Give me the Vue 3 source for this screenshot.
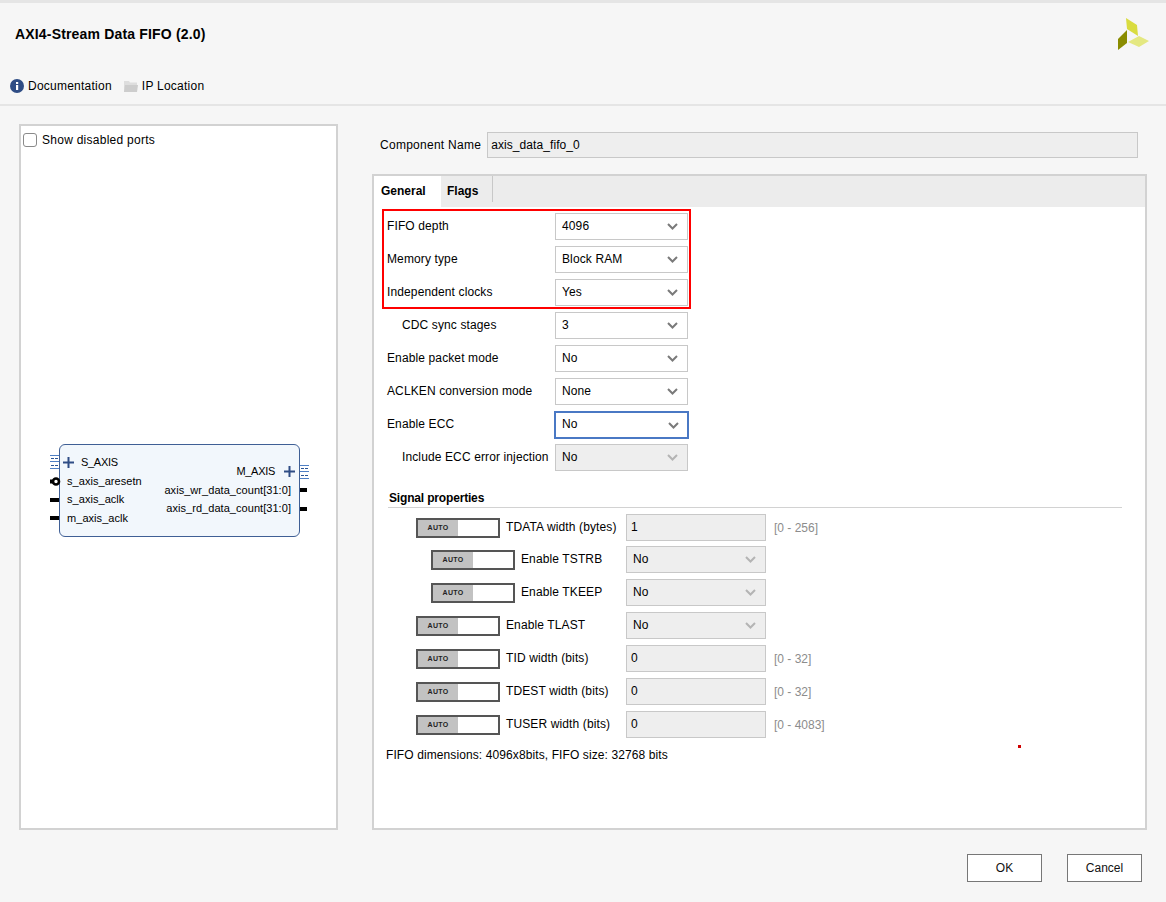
<script setup>
const top = [
  { label: 'FIFO depth', value: '4096' },
  { label: 'Memory type', value: 'Block RAM' },
  { label: 'Independent clocks', value: 'Yes' },
]
const rest = [
  { label: 'CDC sync stages', value: '3', indent: true },
  { label: 'Enable packet mode', value: 'No' },
  { label: 'ACLKEN conversion mode', value: 'None' },
  { label: 'Enable ECC', value: 'No', focus: true },
  { label: 'Include ECC error injection', value: 'No', indent: true, disabled: true },
]
const signals = [
  { label: 'TDATA width (bytes)', value: '1', range: '[0 - 256]' },
  { label: 'Enable TSTRB', value: 'No', select: true, indent: true },
  { label: 'Enable TKEEP', value: 'No', select: true, indent: true },
  { label: 'Enable TLAST', value: 'No', select: true },
  { label: 'TID width (bits)', value: '0', range: '[0 - 32]' },
  { label: 'TDEST width (bits)', value: '0', range: '[0 - 32]' },
  { label: 'TUSER width (bits)', value: '0', range: '[0 - 4083]' },
]
const leftPorts = ['s_axis_aresetn', 's_axis_aclk', 'm_axis_aclk']
const rightPorts = ['axis_wr_data_count[31:0]', 'axis_rd_data_count[31:0]']
</script>

<template>
  <div class="page">
    <header class="head">
      <h1 class="title">AXI4-Stream Data FIFO (2.0)</h1>
      <svg class="logo" width="32" height="33" viewBox="1118 18 32 33">
        <polygon points="1126,18 1137,25 1138,36 1127,29" fill="#d9dc40" />
        <polygon points="1118,39 1127,30 1127,43 1118,50" fill="#8a8c00" />
        <polygon points="1128,42 1139,36 1149,41 1139,47" fill="#e4e881" />
      </svg>
    </header>
    <nav class="links">
      <span class="link">
        <svg width="14" height="14" viewBox="0 0 14 14">
          <circle cx="7" cy="7" r="7" fill="#2f4d85" />
          <rect x="6" y="6" width="2.2" height="5" fill="#fff" />
          <rect x="6" y="3" width="2.2" height="2" fill="#fff" />
        </svg>
        Documentation
      </span>
      <span class="link">
        <svg width="14" height="13" viewBox="0 0 14 13">
          <path d="M0 1h5l1 1.5h7V12H0z" fill="#dedede" />
          <path d="M1 5h13l-1 7H0z" fill="#cdcdcd" />
        </svg>
        IP Location
      </span>
    </nav>

    <main class="main">
      <section class="symbol">
        <label class="show"><span class="check"></span>Show disabled ports</label>
        <div class="block">
          <div class="col left">
            <div class="bus">
              <svg class="plus" width="11" height="11" viewBox="0 0 11 11"><path d="M5.5 0v11M0 5.5h11" stroke="#2f4d85" stroke-width="2" /></svg>
              S_AXIS
            </div>
            <div v-for="p in leftPorts" :key="p" class="port">{{ p }}</div>
          </div>
          <div class="col right">
            <div class="bus">
              M_AXIS
              <svg class="plus" width="11" height="11" viewBox="0 0 11 11"><path d="M5.5 0v11M0 5.5h11" stroke="#2f4d85" stroke-width="2" /></svg>
            </div>
            <div v-for="p in rightPorts" :key="p" class="port">{{ p }}</div>
          </div>
        </div>
        <svg class="pins" width="290" height="100" viewBox="45 440 290 100">
          <g fill="none">
            <path d="M50 455.5h9M50 461.5h9M50 468.5h9M300 465.5h9M300 471.5h9M300 478.5h9" stroke="#4f7fc4" />
            <path d="M51 458.5h8M51 465.5h8M301 468.5h8M301 475.5h8" stroke="#2a5596" stroke-dasharray="3 1" />
          </g>
          <path d="M50 481.5h9M50 500h9M50 518h9M300 490h7M300 509h7" stroke="#000" stroke-width="4" />
          <circle cx="56" cy="481.5" r="3" fill="#fff" stroke="#000" stroke-width="2.6" />
        </svg>
      </section>

      <section class="config">
        <div class="name-row">
          <span class="name-label">Component Name</span>
          <div class="name-field">axis_data_fifo_0</div>
        </div>
        <div class="tabs">
          <div class="tabbar">
            <div class="tab active">General</div>
            <div class="tab">Flags</div>
          </div>
          <div class="form">
            <div class="redbox">
              <div v-for="r in top" :key="r.label" class="row">
                <span class="lbl">{{ r.label }}</span>
                <div class="select">
                  <span>{{ r.value }}</span>
                  <svg width="11" height="7" viewBox="0 0 11 7"><path d="M1 1l4.5 4.5L10 1" fill="none" stroke="#7a7a7a" stroke-width="2" /></svg>
                </div>
              </div>
            </div>
            <div class="plain">
              <div v-for="r in rest" :key="r.label" class="row">
                <span class="lbl" :class="{ ind: r.indent }">{{ r.label }}</span>
                <div class="select" :class="{ focus: r.focus, off: r.disabled }">
                  <span>{{ r.value }}</span>
                  <svg width="11" height="7" viewBox="0 0 11 7"><path d="M1 1l4.5 4.5L10 1" fill="none" :stroke="r.disabled ? '#b4b4b4' : '#7a7a7a'" stroke-width="2" /></svg>
                </div>
              </div>
            </div>
            <div class="signals">
              <div class="sig-title">Signal properties</div>
              <div v-for="s in signals" :key="s.label" class="sig-row">
                <div class="sig-left" :class="{ ind: s.indent }">
                  <div class="auto"><span class="auto-on">AUTO</span></div>
                  <span class="sig-label">{{ s.label }}</span>
                </div>
                <div v-if="s.select" class="select off wide">
                  <span>{{ s.value }}</span>
                  <svg width="11" height="7" viewBox="0 0 11 7"><path d="M1 1l4.5 4.5L10 1" fill="none" stroke="#b4b4b4" stroke-width="2" /></svg>
                </div>
                <div v-else class="input">{{ s.value }}</div>
                <span v-if="s.range" class="range">{{ s.range }}</span>
              </div>
            </div>
            <p class="dims">FIFO dimensions: 4096x8bits, FIFO size: 32768 bits</p>
            <span class="dot"></span>
          </div>
        </div>
      </section>
    </main>

    <footer class="foot">
      <button class="btn">OK</button>
      <button class="btn">Cancel</button>
    </footer>
  </div>
</template>

<style>
html, body { margin: 0; }
</style>

<style scoped>
.page {
  width: 1166px;
  height: 902px;
  box-sizing: border-box;
  border-top: 3px solid #e5e5e5;
  background: #f6f6f6;
  font-family: "Liberation Sans", Arial, sans-serif;
  font-size: 12px;
  letter-spacing: 0.12px;
  color: #000;
  overflow: hidden;
}
.head {
  height: 62px;
  display: flex;
  align-items: flex-start;
  justify-content: space-between;
  padding: 0 16px 0 15px;
}
.title {
  margin: 22px 0 0;
  font-size: 14px;
  line-height: 18px;
  font-weight: 700;
  letter-spacing: 0.17px;
  color: #000;
}
.logo { margin-top: 15px; }
.links {
  height: 41px;
  box-sizing: border-box;
  border-bottom: 2px solid #e5e5e5;
  display: flex;
  gap: 12px;
  padding: 13px 0 0 10px;
  letter-spacing: 0.24px;
}
.link {
  display: flex;
  align-items: center;
  gap: 4px;
  height: 16px;
  line-height: 16px;
}
.main {
  display: flex;
  gap: 34px;
  padding: 18px 19px 0;
}
.symbol {
  position: relative;
  width: 319px;
  height: 706px;
  box-sizing: border-box;
  border: 2px solid #d2d2d2;
  background: #fff;
}
.show {
  display: flex;
  align-items: center;
  gap: 5px;
  padding: 7px 0 0 2px;
  line-height: 14px;
  letter-spacing: 0.26px;
}
.check {
  width: 14px;
  height: 14px;
  box-sizing: border-box;
  border: 1px solid #8a8a8a;
  border-radius: 3px;
  background: #fff;
}
.block {
  position: absolute;
  left: 38px;
  top: 318px;
  width: 241px;
  height: 93px;
  box-sizing: border-box;
  border: 1px solid #3f5f95;
  border-radius: 6px;
  background: #f2f7fc;
  display: flex;
  justify-content: space-between;
  font-size: 11px;
  letter-spacing: 0.05px;
}
.col { display: flex; flex-direction: column; }
.col.left { padding: 8px 0 0 3px; }
.col.right { padding: 17px 4px 0 0; align-items: flex-end; }
.bus { height: 18.6px; line-height: 18.6px; display: flex; align-items: center; gap: 7px; letter-spacing: -0.3px; }
.col.left .port { height: 18.6px; line-height: 18.6px; padding-left: 4px; }
.col.right .port { height: 18.6px; line-height: 18.6px; padding-right: 4px; }
.col.right .bus { gap: 9px; }
.pins { position: absolute; left: 24px; top: 314px; }
.config { width: 775px; }
.name-row {
  display: flex;
  align-items: center;
  gap: 6px;
  padding: 8px 9px 0 8px;
  height: 26px;
  letter-spacing: 0.27px;
}
.name-label { white-space: nowrap; }
.name-field {
  flex: 1;
  height: 26px;
  box-sizing: border-box;
  border: 1px solid #c8c8c8;
  background: #eeeeee;
  padding-left: 3px;
  line-height: 24px;
  letter-spacing: 0.08px;
}
.tabs {
  margin-top: 16px;
  height: 656px;
  box-sizing: border-box;
  border: 2px solid #d2d2d2;
  background: #fff;
}
.tabbar {
  display: flex;
  height: 31px;
  background: #ececec;
  letter-spacing: 0;
}
.tab {
  font-weight: 700;
  line-height: 30px;
  padding: 0 15px 0 6px;
}
.tab.active { background: #fff; width: 67px; box-sizing: border-box; padding-left: 7px; }
.tab:not(.active) { height: 26px; line-height: 30px; border-right: 1px solid #c8c8c8; width: 52px; box-sizing: border-box; }
.form { position: relative; padding: 2px 0 0 8px; }
.redbox {
  width: 309px;
  height: 100px;
  box-sizing: border-box;
  border: 2px solid #f00;
  padding: 2px 0 0 3px;
  display: flex;
  flex-direction: column;
  gap: 6px;
}
.plain {
  display: flex;
  flex-direction: column;
  gap: 6px;
  margin-top: 3px;
  padding-left: 5px;
}
.row { display: flex; align-items: center; height: 27px; }
.lbl { width: 168px; flex: none; padding-bottom: 2px; box-sizing: border-box; white-space: nowrap; }
.lbl.ind { padding-left: 15px; }
.select {
  width: 133px;
  height: 27px;
  box-sizing: border-box;
  border: 1px solid #c8c8c8;
  background: #fff;
  display: flex;
  align-items: center;
  justify-content: space-between;
  padding: 0 9px 0 6px;
}
.select span { padding-bottom: 2px; }
.select.focus {
  border: 2px solid #4a78c4;
  padding: 0 8px 0 6px;
  margin-left: -1px;
  width: 135px;
  height: 28px;
  align-self: flex-start;
}
.select.off { background: #eeeeee; }
.select.wide { width: 140px; }
.signals { margin: 18px 23px 0 6px; }
.sig-title {
  font-weight: 700;
  height: 18px;
  line-height: 18px;
  border-bottom: 1px solid #d2d2d2;
  padding-left: 1px;
  margin-bottom: 6px;
  letter-spacing: -0.17px;
}
.sig-row {
  display: flex;
  align-items: center;
  height: 27px;
  margin-bottom: 6px;
}
.sig-title + .sig-row { margin-bottom: 5px; }
.sig-left {
  width: 238px;
  flex: none;
  box-sizing: border-box;
  padding-left: 28px;
  display: flex;
  align-items: center;
  gap: 6px;
}
.sig-left.ind { padding-left: 43px; }
.auto {
  width: 84px;
  height: 20px;
  box-sizing: border-box;
  border: 2px solid #555;
  background: #fff;
  flex: none;
}
.auto-on {
  display: block;
  width: 40px;
  height: 16px;
  background: #c2c2c2;
  font-size: 7px;
  font-weight: 700;
  line-height: 16px;
  text-align: center;
  color: #222;
  letter-spacing: 0.3px;
}
.sig-label { white-space: nowrap; padding-bottom: 2px; }
.input {
  width: 140px;
  height: 27px;
  box-sizing: border-box;
  border: 1px solid #c8c8c8;
  background: #eeeeee;
  padding: 0 0 2px 4px;
  line-height: 24px;
}
.range { margin-left: 8px; color: #8c8c8c; letter-spacing: 0; }
.dims { margin: 0; padding-left: 4px; line-height: 16px; position: absolute; top: 540px; left: 8px; letter-spacing: 0.1px; }
.dot { position: absolute; left: 644px; top: 538px; width: 3px; height: 3px; background: #d00000; }
.foot {
  display: flex;
  justify-content: flex-end;
  gap: 25px;
  padding: 24px 24px 0 0;
}
.btn {
  width: 75px;
  height: 28px;
  box-sizing: border-box;
  border: 1px solid #777;
  background: #fff;
  font: inherit;
  color: #111;
  padding: 0;
}
</style>
